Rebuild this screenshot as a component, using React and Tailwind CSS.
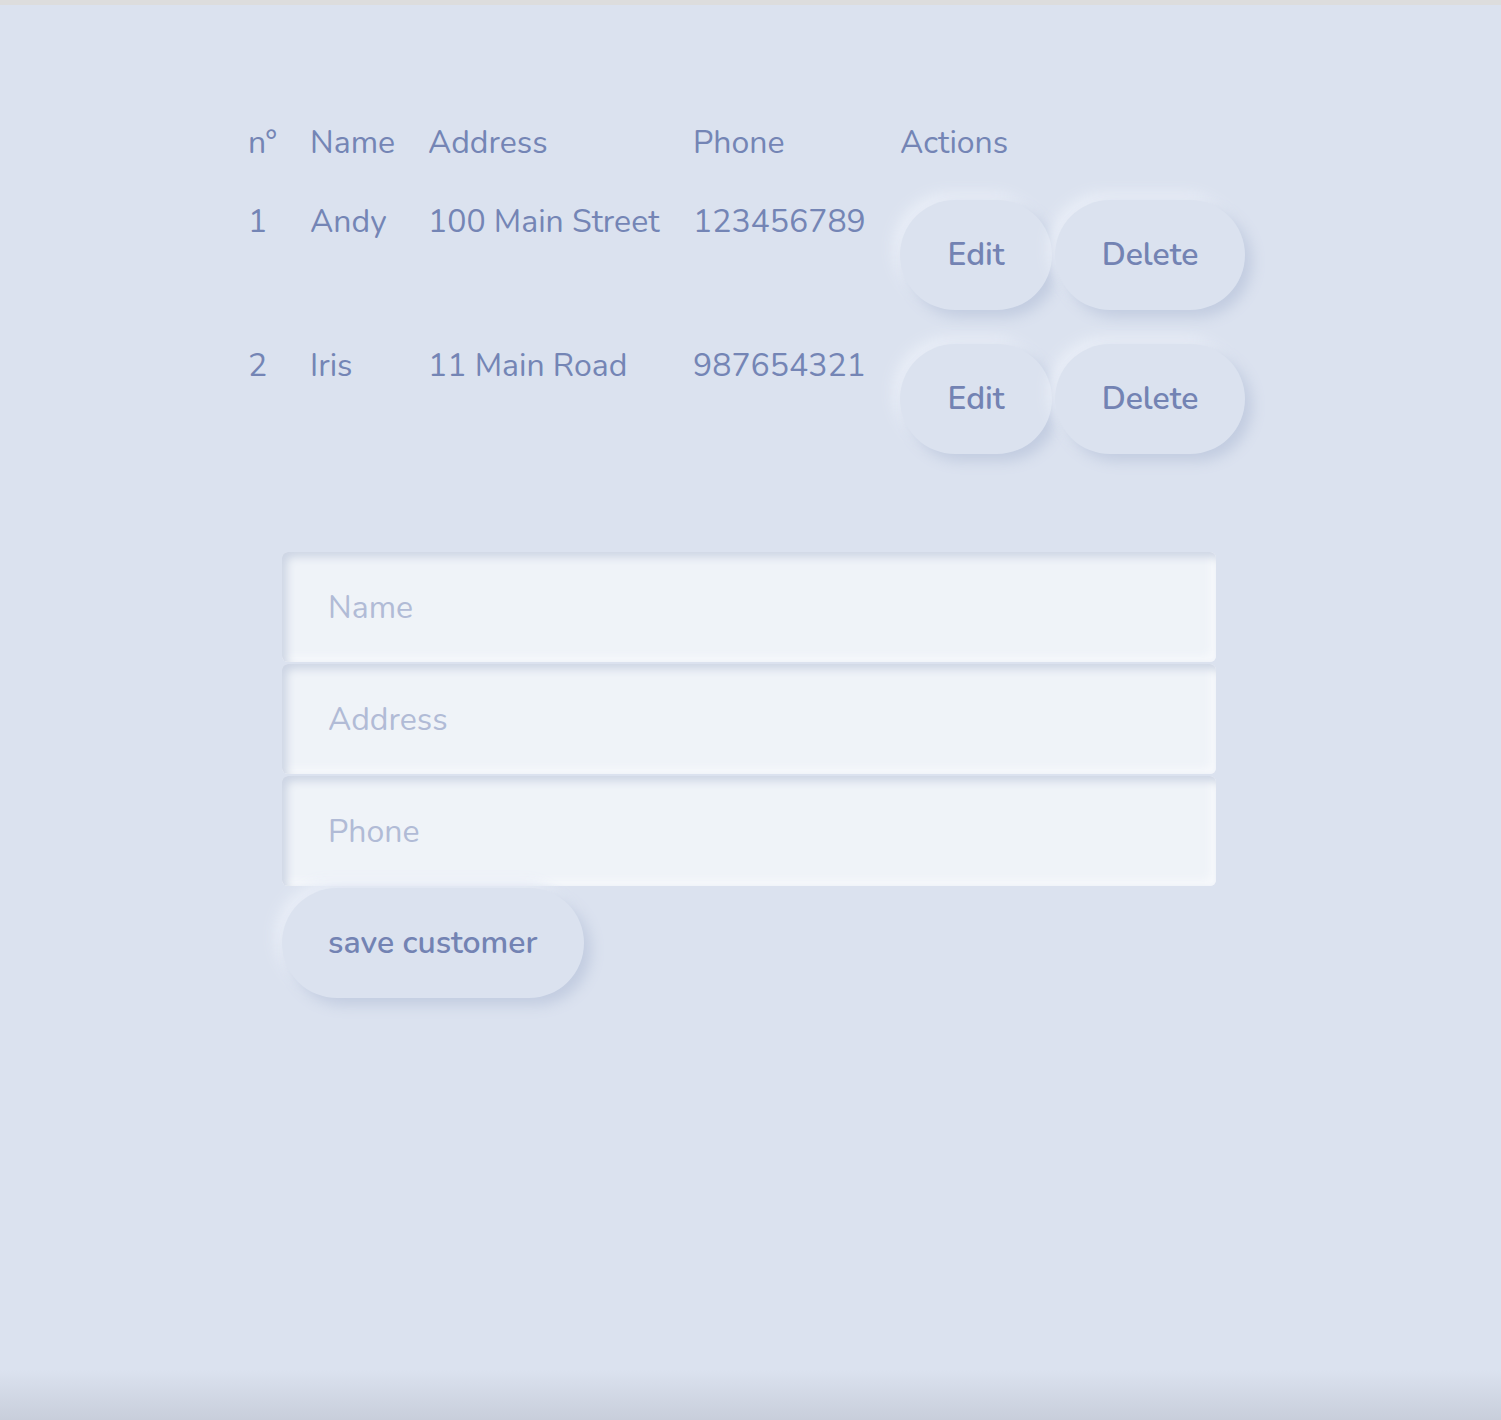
import React from "react";

const rows = [
  { n: "1", name: "Andy", address: "100 Main Street", phone: "123456789" },
  { n: "2", name: "Iris", address: "11 Main Road", phone: "987654321" },
];

function PillButton({ children, className = "" }) {
  return (
    <button
      className={
        "h-[110px] whitespace-nowrap rounded-full bg-[#dbe2ef] text-[32px] font-semibold text-[#7383b3] shadow-[7px_7px_14px_#c2cce0,-7px_-7px_14px_#e9eef7] " +
        className
      }
    >
      {children}
    </button>
  );
}

export default function App() {
  return (
    <div
      className="flex h-[1420px] w-full flex-col overflow-hidden bg-[#dbe2ef] text-[#7485b5]"
      style={{ fontFamily: "Nunito, Lato, 'Open Sans', sans-serif" }}
    >
      <div className="h-[5px] w-full bg-[#dddddd]" />
      <div className="flex-1 pl-[248px] pt-[116px]">
        {/* header */}
        <div className="flex h-[44px] items-center text-[32px] leading-[44px]">
          <div className="w-[62px]">n°</div>
          <div className="w-[118px]">Name</div>
          <div className="w-[265px]">Address</div>
          <div className="w-[207px]">Phone</div>
          <div>Actions</div>
        </div>
        <div className="mt-[35px] flex flex-col gap-[34px]">
          {rows.map((r) => (
            <div key={r.n} className="flex h-[110px] items-start text-[32px] leading-[44px]">
              <div className="w-[62px]">{r.n}</div>
              <div className="w-[118px]">{r.name}</div>
              <div className="w-[265px]">{r.address}</div>
              <div className="w-[207px]">{r.phone}</div>
              <div className="flex gap-[3px]">
                <PillButton className="w-[152px]">Edit</PillButton>
                <PillButton className="w-[190px]">Delete</PillButton>
              </div>
            </div>
          ))}
        </div>

        {/* form */}
        <div className="ml-[34px] mt-[98px] flex w-[934px] flex-col gap-[2px]">
          {["Name", "Address", "Phone"].map((p) => (
            <input
              key={p}
              placeholder={p}
              className="h-[110px] w-full rounded-[6px] bg-[#eff3f8] px-[46px] text-[32px] text-[#7485b5] outline-none placeholder:text-[#b1bbd6] shadow-[inset_5px_5px_8px_#cdd5e4,inset_-5px_-5px_8px_#f7f9fc]"
            />
          ))}
          <PillButton className="w-[302px] pl-[46px] text-left">save customer</PillButton>
        </div>
      </div>
      <div className="h-[50px] w-full bg-gradient-to-b from-[#dbe2ef] to-[#c8cedb]" />
    </div>
  );
}
